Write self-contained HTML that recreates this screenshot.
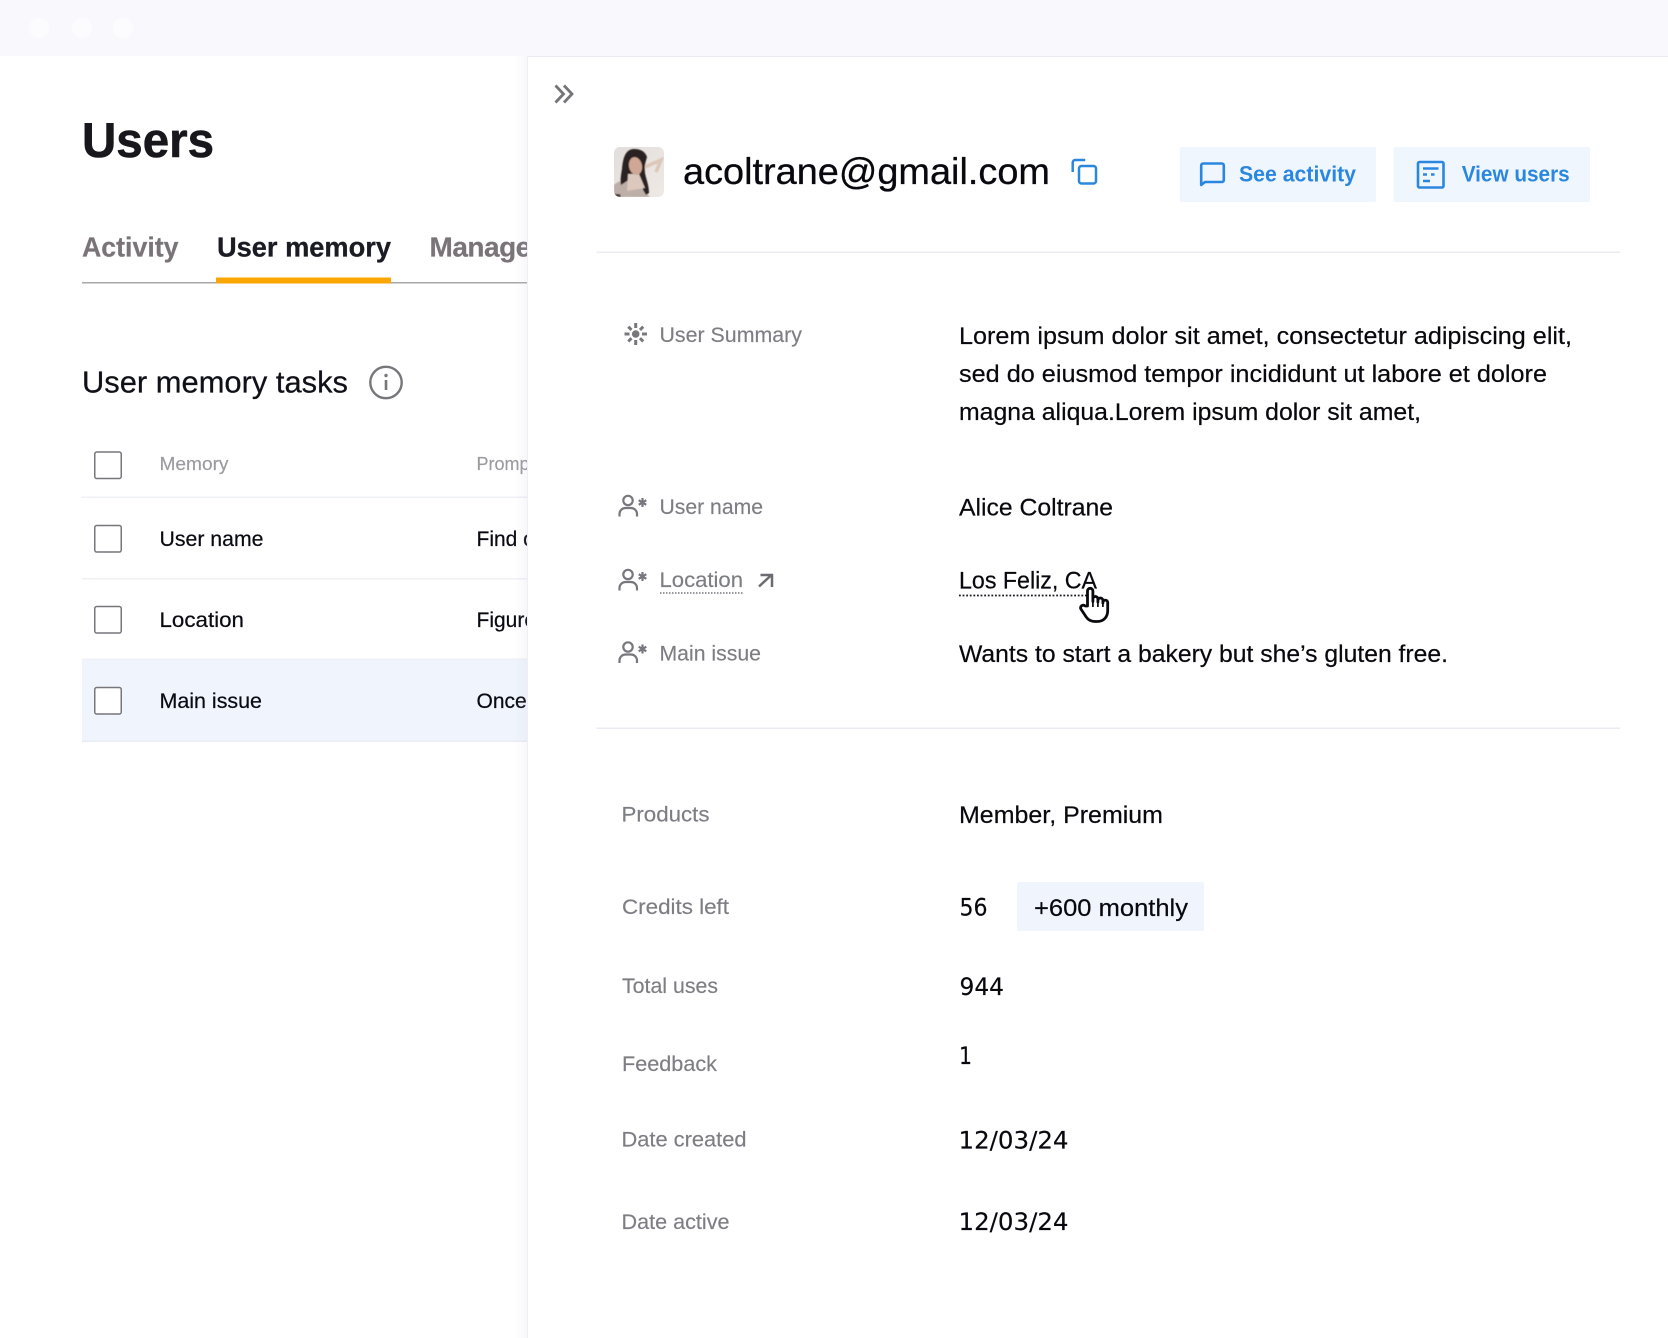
<!DOCTYPE html>
<html lang="en">
<head>
<meta charset="utf-8">
<title>Users</title>
<style>
html,body{margin:0;padding:0;background:#fff;width:1668px;height:1338px;overflow:hidden}
svg{display:block}
text{font-family:"Liberation Sans",sans-serif;white-space:pre}
.h1{font-size:49px;font-weight:700;fill:#17171c;stroke:#17171c;stroke-width:.6px}
.tab{font-size:28px;font-weight:700;fill:#7a7479;stroke:#7a7479;stroke-width:.2px}
.tabon{font-size:28px;font-weight:700;fill:#1b1b24;stroke:#1b1b24;stroke-width:.3px}
.h2{font-size:31px;fill:#101018;stroke:#101018;stroke-width:.25px}
.th{font-size:18px;fill:#9a9a9f;stroke:#9a9a9f;stroke-width:.15px}
.td{font-size:21px;fill:#0a0a12;stroke:#0a0a12;stroke-width:.2px}
.em{font-size:37px;fill:#08080e;stroke:#08080e;stroke-width:.3px}
.btn{font-size:22px;font-weight:700;fill:#2a87e0}
.lb{font-size:21px;fill:#7d7d84;stroke:#7d7d84;stroke-width:.15px}
.v{font-size:24.5px;fill:#08080e;stroke:#08080e;stroke-width:.2px}
.n{font-size:24px;fill:#08080e;font-family:"DejaVu Sans",sans-serif;stroke:#08080e;stroke-width:.15px}
</style>
</head>
<body>
<svg width="1668" height="1338" viewBox="0 0 1668 1338" xmlns="http://www.w3.org/2000/svg">
<defs>
<linearGradient id="sh" x1="0" x2="1" y1="0" y2="0"><stop offset="0" stop-color="#b4b4c8" stop-opacity="0"/><stop offset="1" stop-color="#b4b4c8" stop-opacity=".1"/></linearGradient>
<linearGradient id="av" x1="0" x2="1" y1="0" y2="1"><stop offset="0" stop-color="#e2dedd"/><stop offset="1" stop-color="#efe9e4"/></linearGradient>
<filter id="b1" x="-20%" y="-20%" width="140%" height="140%"><feGaussianBlur stdDeviation=".6"/></filter>
<clipPath id="avc"><rect x="614" y="147" width="50" height="50" rx="6"/></clipPath>
<g id="person" fill="none" stroke="#77777e" stroke-width="2.200">
<circle cx="9.500" cy="6" r="4.700"/>
<path d="M1 22v-2.500a6 6 0 0 1 6-6h5.500a6 6 0 0 1 6 6v2.500"/>
<path d="M24 3.500v9M20.200 5.700l7.600 4.600M27.800 5.700l-7.600 4.600"/>
</g>
</defs>

<!-- window top bar -->
<rect x="0" y="0" width="1668" height="56" fill="#f9f8fc"/>
<circle cx="39" cy="28" r="10" fill="#fcfbfe"/>
<circle cx="82" cy="28" r="10" fill="#fcfbfe"/>
<circle cx="123" cy="28" r="10" fill="#fcfbfe"/>

<!-- left column -->
<text class="h1" x="82" y="157" textLength="132" lengthAdjust="spacingAndGlyphs">Users</text>
<text class="tab" x="82" y="256.500" textLength="96.500" lengthAdjust="spacingAndGlyphs">Activity</text>
<text class="tabon" x="217" y="256.500" textLength="174" lengthAdjust="spacingAndGlyphs">User memory</text>
<text class="tab" x="429.500" y="256.500" letter-spacing="-.5">Manage</text>
<rect x="82" y="282" width="446" height="1.500" fill="#a9a7aa"/>
<rect x="216" y="277.500" width="175" height="6" fill="#f9a602"/>

<text class="h2" x="82" y="392.500" textLength="266" lengthAdjust="spacingAndGlyphs">User memory tasks</text>
<circle cx="386" cy="382.500" r="15.700" fill="none" stroke="#77777b" stroke-width="2.400"/>
<rect x="384.700" y="380" width="2.600" height="10" fill="#77777b"/>
<circle cx="386" cy="375.500" r="1.700" fill="#77777b"/>

<!-- table -->
<rect x="82" y="659" width="446" height="81.500" fill="#f0f5fd"/>
<rect x="82" y="496.500" width="446" height="1.500" fill="#eef0f5"/>
<rect x="82" y="578" width="446" height="1.500" fill="#eef0f5"/>
<rect x="82" y="658.500" width="446" height="1.500" fill="#eef0f5"/>
<rect x="82" y="740.500" width="446" height="1.500" fill="#e9edf3"/>

<g fill="#fff" stroke="#77777b" stroke-width="1.500">
<rect x="94.750" y="452" width="26.500" height="26.500" rx="2"/>
<rect x="94.750" y="525.500" width="26.500" height="26.500" rx="2"/>
<rect x="94.750" y="606.500" width="26.500" height="26.500" rx="2"/>
<rect x="94.750" y="687.500" width="26.500" height="26.500" rx="2"/>
</g>
<text class="th" x="159.500" y="470" textLength="69" lengthAdjust="spacingAndGlyphs">Memory</text>
<text class="th" x="476.500" y="470">Prompt</text>
<text class="td" x="159.500" y="546" textLength="104" lengthAdjust="spacingAndGlyphs">User name</text>
<text class="td" x="476.500" y="546">Find out</text>
<text class="td" x="159.500" y="627" textLength="84.500" lengthAdjust="spacingAndGlyphs">Location</text>
<text class="td" x="476.500" y="627">Figure out</text>
<text class="td" x="159.500" y="708" textLength="102.500" lengthAdjust="spacingAndGlyphs">Main issue</text>
<text class="td" x="476.500" y="708">Once</text>

<!-- panel -->
<rect x="514" y="56" width="13.500" height="1282" fill="url(#sh)"/>
<rect x="527.500" y="56" width="1140.500" height="1282" fill="#fff"/>
<rect x="527.500" y="56" width="1140.500" height="1" fill="#ebebf1"/>
<rect x="527" y="56" width="1" height="1282" fill="#f0eff5"/>

<path d="M555.500 85.500l8 8.500-8 8.500M564 85.500l8 8.500-8 8.500" fill="none" stroke="#737378" stroke-width="2.800"/>

<!-- avatar -->
<g clip-path="url(#avc)">
<rect x="614" y="147" width="50" height="50" fill="url(#av)"/>
<g filter="url(#b1)">
<path d="M645 167L661 160L656 172" fill="none" stroke="#dcc7b8" stroke-width="3.500"/>
<path d="M614 197v-12c4-4 10-6 16-4l10 6 10 10z" fill="#bdaea8"/>
<path d="M634 149c-8 0-11 8-12 20-1 6-2 12-1 16l9-6 8 2 8 14 3-2c0-8-3-14-4-20-1-8 1-12 2-16-2-6-7-8-13-8z" fill="#2a2022"/>
<path d="M628 174l11 0 6 14-18 3z" fill="#dcc8bc"/>
<ellipse cx="635.500" cy="166" rx="6.500" ry="9" transform="rotate(-12 635.500 166)" fill="#cfa794"/>
<path d="M614 194h6l1 3h-7z" fill="#4a3f3c"/>
</g>
</g>

<text class="em" x="683" y="184" textLength="367" lengthAdjust="spacingAndGlyphs">acoltrane@gmail.com</text>

<!-- copy icon -->
<g fill="none" stroke="#2a87e0" stroke-width="2.500">
<path d="M1072.700 172v-9.500a2.500 2.500 0 0 1 2.500-2.500h10"/>
<rect x="1079" y="166" width="17" height="17.500" rx="2.500"/>
</g>

<!-- buttons -->
<rect x="1180" y="147" width="196" height="55" rx="2" fill="#f0f6fe"/>
<rect x="1393.500" y="147" width="196.500" height="55" rx="2" fill="#f0f6fe"/>
<path d="M1201.200 185v-19.500a2 2 0 0 1 2-2h18.600a2 2 0 0 1 2 2v14.500a2 2 0 0 1-2 2h-16.800z" fill="none" stroke="#2a87e0" stroke-width="2.600" stroke-linejoin="round"/>
<text class="btn" x="1239" y="181.500" textLength="117" lengthAdjust="spacingAndGlyphs">See activity</text>
<g fill="none" stroke="#2a87e0" stroke-width="2.600">
<rect x="1418" y="162" width="25.500" height="25.500" rx="1.500"/>
<path d="M1423 168.500h15.500M1423 174.500h4M1431 174.500h3.500M1423 181h7"/>
</g>
<text class="btn" x="1461.700" y="181.500" textLength="108" lengthAdjust="spacingAndGlyphs">View users</text>

<rect x="596.500" y="251.500" width="1023.500" height="1.500" fill="#eceaf2"/>

<!-- sparkle icon -->
<g stroke="#77777c" stroke-width="3" fill="none">
<path d="M635.700 323v5M635.700 340v5M624.500 334h5M642 334h5M628.300 326.700l3.200 3.200M640 338.200l3.200 3.200M643.200 326.700l-3.200 3.200M631.500 338.200l-3.200 3.200"/>
</g>
<circle cx="635.700" cy="334" r="3.800" fill="#77777c"/>

<text class="lb" x="659.500" y="342" textLength="142.500" lengthAdjust="spacingAndGlyphs">User Summary</text>
<text class="v" x="959" y="344" textLength="613" lengthAdjust="spacingAndGlyphs">Lorem ipsum dolor sit amet, consectetur adipiscing elit,</text>
<text class="v" x="959" y="382" textLength="588" lengthAdjust="spacingAndGlyphs">sed do eiusmod tempor incididunt ut labore et dolore</text>
<text class="v" x="959" y="420" textLength="462" lengthAdjust="spacingAndGlyphs">magna aliqua.Lorem ipsum dolor sit amet,</text>

<use href="#person" x="618.500" y="494.500"/>
<text class="lb" x="659.500" y="514" textLength="103.500" lengthAdjust="spacingAndGlyphs">User name</text>
<text class="v" x="959" y="515.500" textLength="154" lengthAdjust="spacingAndGlyphs">Alice Coltrane</text>

<use href="#person" x="618.500" y="568.500"/>
<text class="lb" x="659.500" y="587" textLength="83.500" lengthAdjust="spacingAndGlyphs">Location</text>
<path d="M660 593h83" stroke="#77777c" stroke-width="1.500" stroke-dasharray="1.500 1.500" fill="none"/>
<path d="M759 586.500l13-12M760.500 575h11.500v12" fill="none" stroke="#6b6b72" stroke-width="2.500"/>
<text class="v" x="959" y="588.500" textLength="138" lengthAdjust="spacingAndGlyphs">Los Feliz, CA</text>
<path d="M959 595.500h137" stroke="#1a1a20" stroke-width="1.800" stroke-dasharray="1.800 1.800" fill="none"/>

<use href="#person" x="618.500" y="641"/>
<text class="lb" x="659.500" y="660.500" textLength="101.500" lengthAdjust="spacingAndGlyphs">Main issue</text>
<text class="v" x="959" y="662" textLength="489" lengthAdjust="spacingAndGlyphs">Wants to start a bakery but she’s gluten free.</text>

<rect x="596.500" y="727.500" width="1023.500" height="1.500" fill="#eceaf2"/>

<text class="lb" x="621.500" y="821.500" textLength="88" lengthAdjust="spacingAndGlyphs">Products</text>
<text class="v" x="959" y="823" textLength="204" lengthAdjust="spacingAndGlyphs">Member, Premium</text>

<text class="lb" x="622" y="914" textLength="107" lengthAdjust="spacingAndGlyphs">Credits left</text>
<text class="n" x="959.500" y="915.500" textLength="28" lengthAdjust="spacingAndGlyphs">56</text>
<rect x="1017" y="882" width="187" height="49" rx="2" fill="#f0f5fd"/>
<text class="v" x="1034" y="916" textLength="154" lengthAdjust="spacingAndGlyphs">+600 monthly</text>

<text class="lb" x="622" y="993" textLength="96" lengthAdjust="spacingAndGlyphs">Total uses</text>
<text class="n" x="959.500" y="995" textLength="44.500" lengthAdjust="spacingAndGlyphs">944</text>

<text class="lb" x="622" y="1071" textLength="95" lengthAdjust="spacingAndGlyphs">Feedback</text>
<text class="n" x="959" y="1064" textLength="13" lengthAdjust="spacingAndGlyphs">1</text>

<text class="lb" x="621.500" y="1146.500" textLength="125" lengthAdjust="spacingAndGlyphs">Date created</text>
<text class="n" x="958.500" y="1148.500" textLength="110" lengthAdjust="spacingAndGlyphs">12/03/24</text>

<text class="lb" x="621.500" y="1229" textLength="108" lengthAdjust="spacingAndGlyphs">Date active</text>
<text class="n" x="958.500" y="1230" textLength="110" lengthAdjust="spacingAndGlyphs">12/03/24</text>

<!-- hand cursor -->
<path d="M1087.500 606v-15a2.700 2.700 0 0 1 5.400 0v10.500v-2.500a2.500 2.500 0 0 1 5 0v3v-1.500a2.500 2.500 0 0 1 5 0v2.500v-.5a2.400 2.400 0 0 1 4.800 0v8c0 6.500-4 11-10.500 11h-2.200c-4 0-6.800-1.500-8.800-4.500l-5.300-8c-1.500-2.500 2-5 4.300-3z" fill="#fff" stroke="#0a0a0e" stroke-width="2.800" stroke-linejoin="round"/>
<path d="M1092.900 600v7M1097.900 601v6M1102.900 602v5" stroke="#0a0a0e" stroke-width="1.700" fill="none"/>
</svg>
</body>
</html>
